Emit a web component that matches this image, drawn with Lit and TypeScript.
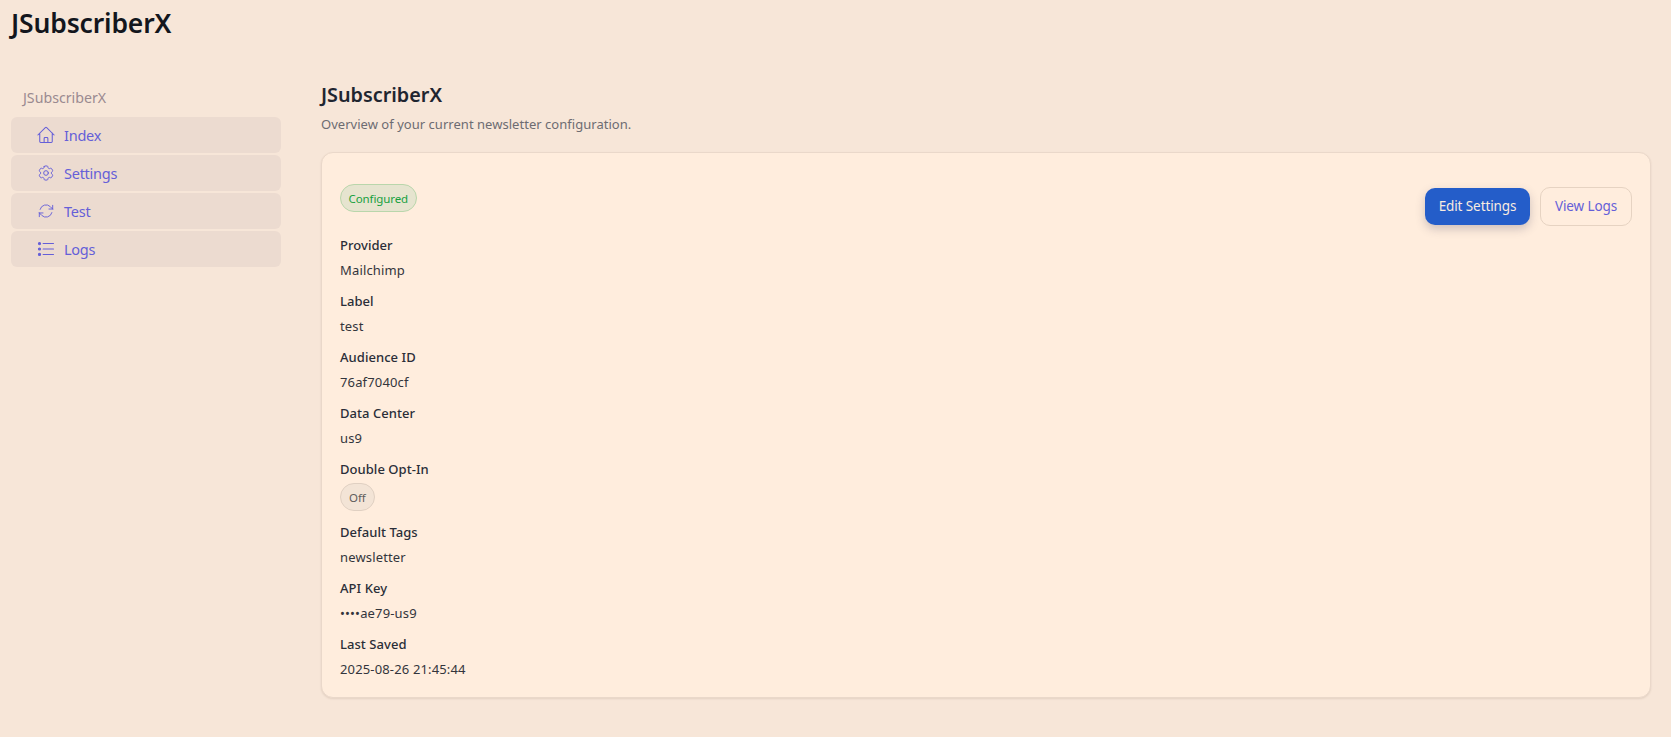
import { LitElement, html, css, svg } from "lit";
import { customElement } from "lit/decorators.js";

const icons: Record<string, unknown> = {
  home: svg`<path d="m2.25 12 8.954-8.955c.44-.439 1.152-.439 1.591 0L21.75 12M4.5 9.75v10.125c0 .621.504 1.125 1.125 1.125H9.75v-4.875c0-.621.504-1.125 1.125-1.125h2.25c.621 0 1.125.504 1.125 1.125V21h4.125c.621 0 1.125-.504 1.125-1.125V9.75M8.25 21h8.25"/>`,
  cog: svg`<path d="M9.594 3.94c.09-.542.56-.94 1.11-.94h2.593c.55 0 1.02.398 1.11.94l.213 1.281c.063.374.313.686.645.87.074.04.147.083.22.127.325.196.72.257 1.075.124l1.217-.456a1.125 1.125 0 0 1 1.37.49l1.296 2.247a1.125 1.125 0 0 1-.26 1.431l-1.003.827c-.293.241-.438.613-.43.992a7.723 7.723 0 0 1 0 .255c-.008.378.137.75.43.991l1.004.827c.424.35.534.955.26 1.43l-1.298 2.247a1.125 1.125 0 0 1-1.369.491l-1.217-.456c-.355-.133-.75-.072-1.076.124a6.47 6.47 0 0 1-.22.128c-.331.183-.581.495-.644.869l-.213 1.281c-.09.543-.56.94-1.11.94h-2.594c-.55 0-1.019-.398-1.11-.94l-.213-1.281c-.062-.374-.312-.686-.644-.87a6.52 6.52 0 0 1-.22-.127c-.325-.196-.72-.257-1.076-.124l-1.217.456a1.125 1.125 0 0 1-1.369-.49l-1.297-2.247a1.125 1.125 0 0 1 .26-1.431l1.004-.827c.292-.24.437-.613.43-.991a6.932 6.932 0 0 1 0-.255c.007-.38-.138-.751-.43-.992l-1.004-.827a1.125 1.125 0 0 1-.26-1.43l1.297-2.247a1.125 1.125 0 0 1 1.37-.491l1.216.456c.356.133.751.072 1.076-.124.072-.044.146-.086.22-.128.332-.183.582-.495.644-.869l.214-1.28Z"/><path d="M15 12a3 3 0 1 1-6 0 3 3 0 0 1 6 0Z"/>`,
  sync: svg`<path d="M16.023 9.348h4.992v-.001M2.985 19.644v-4.992m0 0h4.992m-4.993 0 3.181 3.183a8.25 8.25 0 0 0 13.803-3.7M4.031 9.865a8.25 8.25 0 0 1 13.803-3.7l3.181 3.182m0-4.991v4.99"/>`,
  list: svg`<path d="M8.5 5.5h12.5M8.5 12h12.5M8.5 18.5h12.5"/><circle cx="4.2" cy="5.5" r="1.3" fill="currentColor"/><circle cx="4.2" cy="12" r="1.3" fill="currentColor"/><circle cx="4.2" cy="18.5" r="1.3" fill="currentColor"/>`,
};

const nav = [
  ["Index", "home", "0 0 24 24"],
  ["Settings", "cog", "-0.8 -0.8 25.6 25.6"],
  ["Test", "sync", "-1.5 -1.5 27 27"],
  ["Logs", "list", "0 0 24 24"],
];

const plainFields = [
  ["Provider", "Mailchimp"],
  ["Label", "test"],
  ["Audience ID", "76af7040cf"],
  ["Data Center", "us9"],
];
const laterFields = [
  ["Default Tags", "newsletter"],
  ["API Key", "••••ae79-us9"],
  ["Last Saved", "2025-08-26 21:45:44"],
];

@customElement("app-root")
export class AppRoot extends LitElement {
  static styles = css`
    :host {
      display: block;
      min-height: 737px;
      background: #f7e6d8;
      color: #1f2530;
      font-family: "Noto Sans", "Open Sans", sans-serif;
      font-size: 13px;
    }
    h1 {
      margin: 0;
      padding: 4px 0 0 11px;
      height: 53px;
      box-sizing: border-box;
      font-size: 26.5px;
      line-height: 38px;
      font-weight: 600;
      color: #13161d;
      letter-spacing: -0.15px;
    }
    .layout {
      display: grid;
      grid-template-columns: 270px 1fr;
      column-gap: 40px;
      padding: 22px 20px 0 11px;
    }
    .side-title {
      box-sizing: border-box;
      padding: 2px 0 0 12px;
      height: 42px;
      line-height: 42px;
      font-size: 14.2px;
      color: #9a8a90;
    }
    nav {
      display: flex;
      flex-direction: column;
      gap: 2px;
    }
    .item {
      display: flex;
      align-items: center;
      height: 36px;
      padding-left: 25px;
      gap: 8px;
      border-radius: 6px;
      background: #ecdbd0;
      color: #655fd8;
      font-size: 14.5px;
      letter-spacing: -0.25px;
    }
    .item svg {
      width: 20px;
      height: 20px;
      fill: none;
      stroke: currentColor;
      stroke-width: 1.25;
      stroke-linecap: round;
      stroke-linejoin: round;
      flex: none;
    }
    .main-title {
      margin: 0;
      padding-top: 5px;
      height: 36px;
      box-sizing: border-box;
      font-size: 19.8px;
      line-height: 29px;
      font-weight: 600;
      color: #1f2530;
    }
    .sub {
      margin: 0;
      height: 41px;
      line-height: 26px;
      font-size: 13px;
      letter-spacing: 0.03px;
      color: #6d6c72;
    }
    .card {
      display: flex;
      justify-content: space-between;
      box-sizing: border-box;
      height: 546px;
      padding: 31px 18px 0 18px;
      background: #ffeddd;
      border: 1px solid #ead8ca;
      border-radius: 12px;
      box-shadow: 0 1px 2px rgba(90, 60, 40, 0.12);
    }
    .badge {
      display: inline-flex;
      align-items: center;
      box-sizing: border-box;
      height: 28px;
      padding: 0 7.5px;
      border-radius: 14px;
      font-size: 11.5px;
      letter-spacing: -0.1px;
    }
    .ok {
      background: #e6e4cf;
      border: 1px solid #b9d6ab;
      color: #17a03f;
    }
    .off {
      background: #f3e4d6;
      border: 1px solid #e0d0c2;
      color: #5f5d5c;
      margin-top: 1px;
      padding: 0 8px;
    }
    .fields {
      display: flex;
      flex-direction: column;
    }
    .status {
      height: 48px;
    }
    .field {
      height: 56px;
    }
    .k {
      height: 26px;
      line-height: 26px;
      font-weight: 500;
      color: #2a2e38;
      letter-spacing: 0.05px;
    }
    .v {
      height: 30px;
      line-height: 24px;
      letter-spacing: 0.15px;
      color: #33353c;
    }
    .toggle {
      height: 63px;
    }
    .actions {
      display: flex;
      align-items: center;
      gap: 10px;
      height: 40px;
      margin-top: 2px;
    }
    .btn {
      display: flex;
      align-items: center;
      justify-content: center;
      box-sizing: border-box;
      border-radius: 10px;
      font-size: 13.5px;
      letter-spacing: -0.1px;
    }
    .primary {
      width: 105px;
      height: 37px;
      background: #245dc9;
      color: #f8ebe0;
      box-shadow: 0 4px 10px rgba(60, 60, 90, 0.25);
    }
    .secondary {
      width: 92px;
      height: 39px;
      border: 1px solid #e6d3c2;
      color: #655fd8;
    }
  `;

  private field([k, v]: string[]) {
    return html`<div class="field"><div class="k">${k}</div><div class="v">${v}</div></div>`;
  }

  render() {
    return html`
      <h1>JSubscriberX</h1>
      <div class="layout">
        <aside>
          <div class="side-title">JSubscriberX</div>
          <nav>
            ${nav.map(
              ([label, icon, box]) => html`<div class="item">
                <svg viewBox=${box}>${icons[icon]}</svg><span>${label}</span>
              </div>`
            )}
          </nav>
        </aside>
        <main>
          <h2 class="main-title">JSubscriberX</h2>
          <p class="sub">Overview of your current newsletter configuration.</p>
          <section class="card">
            <div class="fields">
              <div class="status"><span class="badge ok">Configured</span></div>
              ${plainFields.map((f) => this.field(f))}
              <div class="toggle">
                <div class="k">Double Opt-In</div>
                <span class="badge off">Off</span>
              </div>
              ${laterFields.map((f) => this.field(f))}
            </div>
            <div class="actions">
              <div class="btn primary">Edit Settings</div>
              <div class="btn secondary">View Logs</div>
            </div>
          </section>
        </main>
      </div>
    `;
  }
}
